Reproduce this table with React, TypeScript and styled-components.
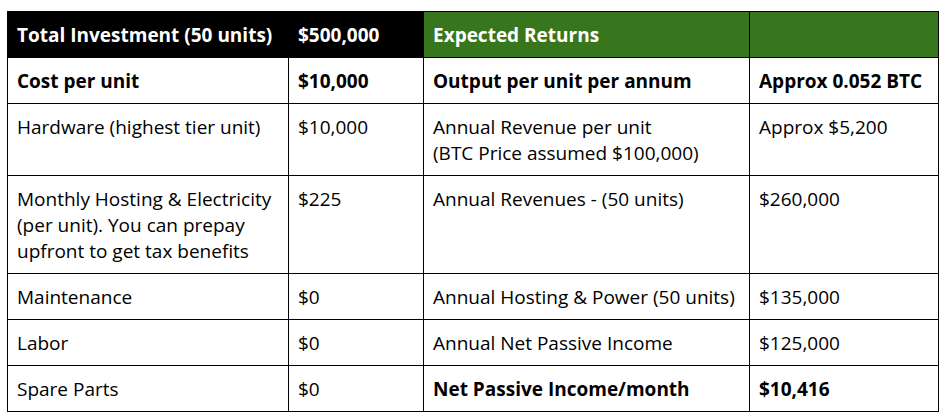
import styled, { createGlobalStyle } from "styled-components";

const GlobalStyle = createGlobalStyle`
    body {
        margin: 0;
        background: #ffffff;
        font-family: "Open Sans", "Noto Sans", sans-serif;
        color: #000000;
    }
`

type Tone = "black" | "green" | "plain";

type CellData = {
    text: string[];
    bold?: boolean;
};

type RowData = {
    cells: CellData[];
    header?: boolean;
};

const rows: RowData[] = [
    {
        header: true,
        cells: [
            { text: ["Total Investment (50 units)"], bold: true },
            { text: ["$500,000"], bold: true },
            { text: ["Expected Returns"], bold: true },
            { text: [""], bold: true },
        ],
    },
    {
        cells: [
            { text: ["Cost per unit"], bold: true },
            { text: ["$10,000"], bold: true },
            { text: ["Output per unit per annum"], bold: true },
            { text: ["Approx 0.052 BTC"], bold: true },
        ],
    },
    {
        cells: [
            { text: ["Hardware (highest tier unit)"] },
            { text: ["$10,000"] },
            { text: ["Annual Revenue per unit", "(BTC Price assumed $100,000)"] },
            { text: ["Approx $5,200"] },
        ],
    },
    {
        cells: [
            { text: ["Monthly Hosting & Electricity", "(per unit). You can prepay", "upfront to get tax benefits"] },
            { text: ["$225"] },
            { text: ["Annual Revenues - (50 units)"] },
            { text: ["$260,000"] },
        ],
    },
    {
        cells: [
            { text: ["Maintenance"] },
            { text: ["$0"] },
            { text: ["Annual Hosting & Power (50 units)"] },
            { text: ["$135,000"] },
        ],
    },
    {
        cells: [
            { text: ["Labor"] },
            { text: ["$0"] },
            { text: ["Annual Net Passive Income"] },
            { text: ["$125,000"] },
        ],
    },
    {
        cells: [
            { text: ["Spare Parts"] },
            { text: ["$0"] },
            { text: ["Net Passive Income/month"], bold: true },
            { text: ["$10,416"], bold: true },
        ],
    },
];

const widths = [281, 135, 326, 189];

const App = () => {
    return (
        <>
            <GlobalStyle />
            <Page>
                <Table>
                    <colgroup>
                        {widths.map((w, i) => (
                            <col key={i} style={{ width: w }} />
                        ))}
                    </colgroup>
                    <tbody>
                        {rows.map((row, r) => (
                            <tr key={r}>
                                {row.cells.map((cell, c) => {
                                    const tone: Tone = row.header ? (c < 2 ? "black" : "green") : "plain";
                                    return (
                                        <Cell key={c} $tone={tone} $bold={!!cell.bold}>
                                            {cell.text.map((line, l) => (
                                                <Line key={l}>{line}</Line>
                                            ))}
                                        </Cell>
                                    );
                                })}
                            </tr>
                        ))}
                    </tbody>
                </Table>
            </Page>
        </>
    )
}

const Page = styled.div`
    padding: 11px 0 0 7px;
`

const Table = styled.table`
    border-collapse: collapse;
    table-layout: fixed;
    width: 931px;
`

const toneBg = { black: "#000000", green: "#38761d", plain: "#ffffff" };

const Cell = styled.td<{ $tone: Tone; $bold: boolean }>`
    border: 1px solid #000000;
    padding: 9.5px 9px 9.5px 9px;
    vertical-align: top;
    font-size: 19px;
    line-height: 26px;
    font-weight: ${props => (props.$bold ? 700 : 400)};
    background-color: ${props => toneBg[props.$tone]};
    color: ${props => (props.$tone === "plain" ? "#000000" : "#ffffff")};
    white-space: nowrap;
`

const Line = styled.div`
    min-height: 26px;
`

export default App;
